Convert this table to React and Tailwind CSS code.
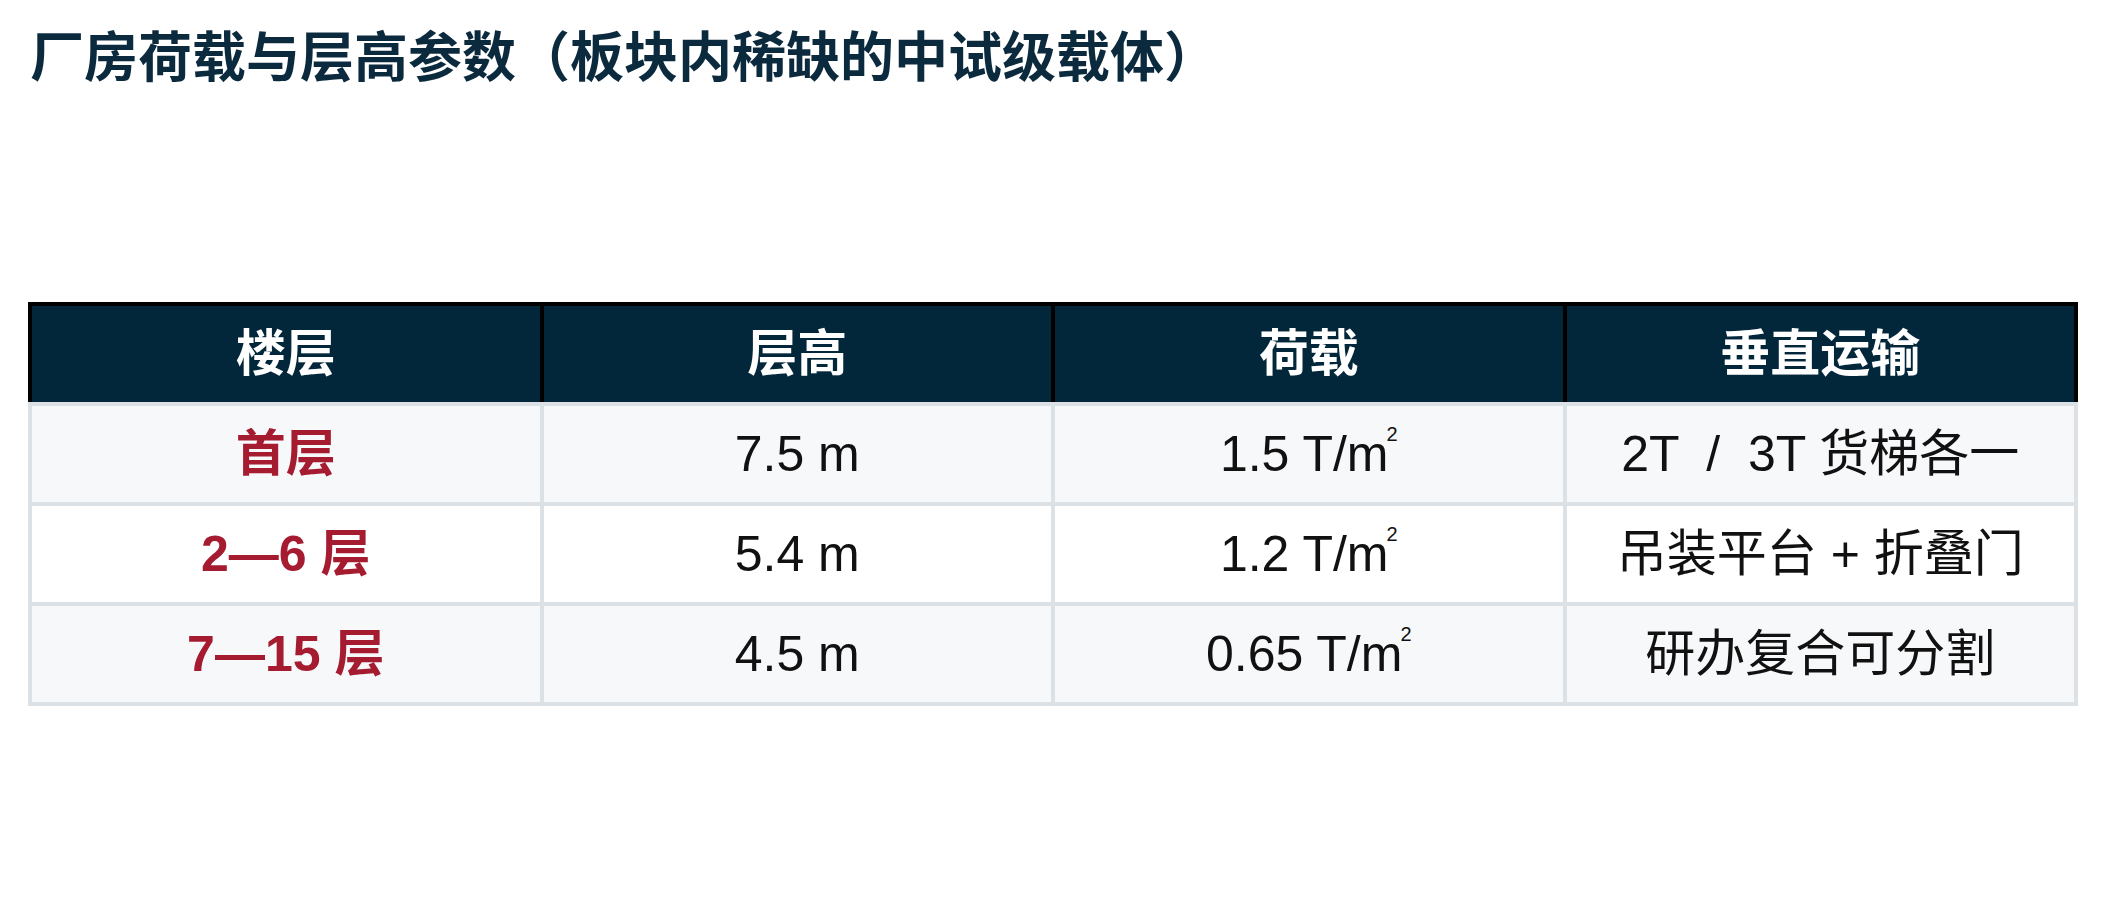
import React from "react";

const rows = [
  { floor: "首层", height: "7.5 m", load: "1.5 T/m", lift: "2T  /  3T 货梯各一" },
  { floor: "2—6 层", height: "5.4 m", load: "1.2 T/m", lift: "吊装平台 + 折叠门" },
  { floor: "7—15 层", height: "4.5 m", load: "0.65 T/m", lift: "研办复合可分割" },
];

const headers = ["楼层", "层高", "荷载", "垂直运输"];

const App = () => {
  return (
    <div
      className="w-[2106px] h-[904px] bg-white px-[28px] pt-[26px]"
      style={{ fontFamily: '"Liberation Sans", "Noto Sans CJK SC", sans-serif' }}
    >
      {/* Title */}
      <h1 className="pl-[2px] text-[54px] leading-[64px] font-bold text-[#0c2a3d]">
        厂房荷载与层高参数（板块内稀缺的中试级载体）
      </h1>

      {/* Table */}
      <div className="mt-[212px]">
        <div className="grid grid-cols-4 gap-x-[4px] bg-black px-[4px] pt-[4px]">
          {headers.map((h) => (
            <div
              key={h}
              className="h-[96px] bg-[#02263a] flex items-center justify-center text-white text-[50px] font-bold leading-none"
            >
              {h}
            </div>
          ))}
        </div>
        <div className="grid grid-cols-4 gap-[4px] bg-[#dce1e6] p-[4px]">
          {rows.map((r, i) => {
            const bg = i % 2 === 0 ? "bg-[#f7f8fa]" : "bg-white";
            return (
              <React.Fragment key={r.floor}>
                <div
                  className={`${bg} h-[96px] flex items-center justify-center text-[50px] font-bold text-[#a51b30] leading-none`}
                >
                  {r.floor}
                </div>
                <div
                  className={`${bg} h-[96px] flex items-center justify-center text-[50px] text-[#111111] leading-none`}
                >
                  {r.height}
                </div>
                <div
                  className={`${bg} h-[96px] flex items-center justify-center text-[50px] text-[#111111] leading-none`}
                >
                  <span>
                    {r.load}
                    <sup className="text-[20px] align-top relative top-[5px] ml-[-2px]">2</sup>
                  </span>
                </div>
                <div
                  className={`${bg} h-[96px] flex items-center justify-center text-[50px] text-[#111111] leading-none whitespace-pre`}
                >
                  {r.lift}
                </div>
              </React.Fragment>
            );
          })}
        </div>
      </div>
    </div>
  );
};

export default App;
